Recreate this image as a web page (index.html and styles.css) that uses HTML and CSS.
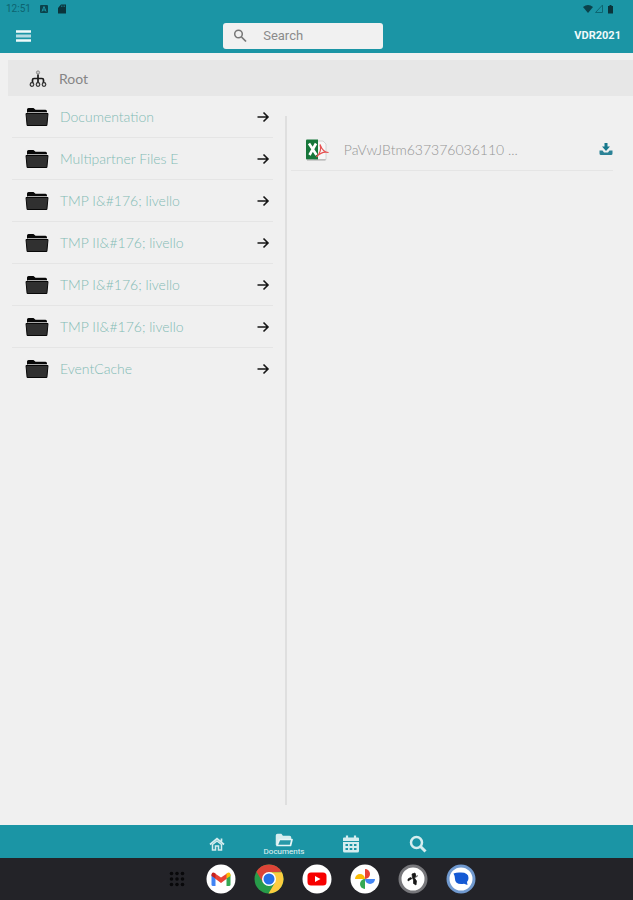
FILE: index.html
```html
<!DOCTYPE html>
<html lang="en">
<head>
<meta charset="utf-8">
<meta name="viewport" content="width=device-width, initial-scale=1">
<title>VDR2021 Documents</title>
<link rel="stylesheet" href="styles.css">
</head>
<body>
<svg class="defs" aria-hidden="true">
  <symbol id="folder" viewBox="0 0 24 20">
    <path d="M2 6V2.500q0-1.500 1.500-1.500H8.500L10.500 2.800H20.500Q22 2.800 22 4.500V5H4Z" fill="#080808"/>
    <path d="M2.500 5.500H22" stroke="#aaa" stroke-width="1"/>
    <path d="M1 6.500H23L21.900 18.500H2.100Z" fill="#303030" stroke="#080808" stroke-width="1" stroke-linejoin="round"/>
  </symbol>
  <symbol id="arrow" viewBox="0 0 14 14">
    <path d="M1.500 7H12M7.500 2.500 12 7 7.500 11.500" fill="none" stroke="#161616" stroke-width="1.600"/>
  </symbol>
</svg>
<header class="topbar">
  <div class="status">
    <span class="clock">12:51</span>
    <svg class="status-icon" viewBox="0 0 10 10"><rect x="1" y="1" width="8" height="8" rx="1" fill="#0b424b"/><path d="M3 7.500 5 2.500 7 7.500M3.500 6H6.500" fill="none" stroke="#1b95a5" stroke-width="1"/></svg>
    <svg class="status-icon sd" viewBox="0 0 10 10"><path d="M1 4 4 0.500H9V9.500H1Z" fill="#0b343b"/><path d="M4.500 1.500V3M6 1.500V3M7.500 1.500V3" stroke="#1b95a5" stroke-width=".6"/></svg>
    <svg class="signals" viewBox="0 0 32 10"><path d="M0 3Q5-1 10 3L5 9Z" fill="#0b424b"/><path d="M12.500 8.500 19.500 1V8.500Z" fill="none" stroke="#0d6672"/><path d="M25 2h1.500V1h2v1H30V9.500H25Z" fill="#0b343b"/></svg>
  </div>
  <div class="toolbar">
    <button class="menu" aria-label="Menu"><svg viewBox="0 0 16 14"><path d="M0 2.500H15M0 11.500H15" stroke="#f0fafa" stroke-width="2.600"/><path d="M0 7H15" stroke="#b5dbe2" stroke-width="3"/></svg></button>
    <label class="search">
      <svg viewBox="0 0 14 14"><circle cx="5.500" cy="5" r="3.800" fill="none" stroke="#777" stroke-width="1.500"/><path d="m8.500 8 4.500 4.500" stroke="#777" stroke-width="1.700"/></svg>
      <input type="search" placeholder="Search" aria-label="Search">
    </label>
    <span class="room">VDR2021</span>
  </div>
</header>
<main>
  <nav class="crumb" aria-label="Path">
    <svg viewBox="0 0 18 18"><circle cx="9" cy="2.500" r="1.600" fill="#ccc" stroke="#888"/><path d="M9 4.500V14M3.500 13V10Q3.500 8.500 5 8.500H13Q14.500 8.500 14.500 10V13" fill="none" stroke="#1a1a1a" stroke-width="1.700"/><g fill="#ddd" stroke="#333" stroke-width="1.200"><circle cx="3" cy="14.500" r="1.800"/><circle cx="9" cy="14.500" r="1.800"/><circle cx="15" cy="14.500" r="1.800"/></g></svg>
    <span>Root</span>
  </nav>
  <div class="panes">
    <ul class="folders">
      <li><a href="#"><svg class="folder"><use href="#folder"/></svg><span>Documentation</span><svg class="arrow"><use href="#arrow"/></svg></a></li>
      <li><a href="#"><svg class="folder"><use href="#folder"/></svg><span>Multipartner Files E</span><svg class="arrow"><use href="#arrow"/></svg></a></li>
      <li><a href="#"><svg class="folder"><use href="#folder"/></svg><span>TMP I&amp;#176; livello</span><svg class="arrow"><use href="#arrow"/></svg></a></li>
      <li><a href="#"><svg class="folder"><use href="#folder"/></svg><span>TMP II&amp;#176; livello</span><svg class="arrow"><use href="#arrow"/></svg></a></li>
      <li><a href="#"><svg class="folder"><use href="#folder"/></svg><span>TMP I&amp;#176; livello</span><svg class="arrow"><use href="#arrow"/></svg></a></li>
      <li><a href="#"><svg class="folder"><use href="#folder"/></svg><span>TMP II&amp;#176; livello</span><svg class="arrow"><use href="#arrow"/></svg></a></li>
      <li><a href="#"><svg class="folder"><use href="#folder"/></svg><span>EventCache</span><svg class="arrow"><use href="#arrow"/></svg></a></li>
    </ul>
    <section class="files">
      <div class="file">
        <svg class="filetype" viewBox="0 0 24 22"><path d="M10 2H18L21 5V20.500H9Z" fill="#f7f7f7" stroke="#ccc" stroke-width=".8"/><path d="M1 1.500Q1 .5 2 .5H13V20.500H2Q1 20.500 1 19.500Z" fill="#16763a"/><path d="M2 21H20.500" stroke="#999" stroke-width=".8"/><path d="m4 4.500 7.500 11.500M11 4.500 4.500 16" stroke="#fff" stroke-width="2.600"/><path d="M15 5.500C17 11 19 13.500 23.500 13.500C19 12.500 15 14 11.500 18C14.500 15 16.500 10 15 5.500Z" fill="none" stroke="#e65151" stroke-width="1.200"/></svg>
        <span class="name">PaVwJBtm637376036110 ...</span>
        <button class="download" aria-label="Download"><svg viewBox="0 0 14 14"><path d="M5.500 0h3v3.500H11L7 8 3 3.500H5.500Z" fill="#17788c"/><path d="M.5 7.500H3.500L5 9.500H9L10.500 7.500H13.500V10.500Q13.500 12 12 12H2Q.5 12 .5 10.500Z" fill="#2b8296"/></svg></button>
      </div>
    </section>
  </div>
</main>
<nav class="tabs" aria-label="Sections">
  <a href="#" aria-label="Home"><svg viewBox="0 0 18 18"><path d="M2 9.500 9 3.500 16 9.500M13.500 3.500V6.500" fill="none" stroke="#d5edef" stroke-width="1.700"/><path d="M4.500 9.500V15H7.500V11H10.500V15H13.500V9.500L9 6Z" fill="none" stroke="#d5edef" stroke-width="1.500"/></svg></a>
  <a href="#" class="active"><svg viewBox="0 0 18 15"><path d="M1.500 12V2.500Q1.500 1.500 2.500 1.500H6L7.500 3.500H14.500Q15.500 3.500 15.500 4.500V6" fill="#d5edef" stroke="#d5edef" stroke-width="1.500"/><path d="M4.500 6.500H17L15.500 12.500H2Z" fill="#2799a8" stroke="#e6f5f6" stroke-width="1.700" stroke-linejoin="round"/></svg><span>Documents</span></a>
  <a href="#" aria-label="Calendar"><svg viewBox="0 0 18 18"><path d="M2 2.500H16Q17 2.500 17 3.500V6H1V3.500Q1 2.500 2 2.500ZM1 7H17V16Q17 17.500 15.500 17.500H2.500Q1 17.500 1 16Z" fill="#d5edef"/><path d="M5 .5V4M13 .5V4" stroke="#d5edef" stroke-width="2.200"/><path d="M3.500 10H6M7.700 10H10.300M12 10H14.500M3.500 14H6M7.700 14H10.300M12 14H14.500" stroke="#1b95a5" stroke-width="1.900"/></svg></a>
  <a href="#" aria-label="Find"><svg viewBox="0 0 18 18"><circle cx="7.500" cy="7.500" r="5.500" fill="none" stroke="#d5edef" stroke-width="2.500"/><path d="m11.500 11.500 5 5" stroke="#d5edef" stroke-width="3"/></svg></a>
</nav>
<footer class="dock">
  <button class="apps" aria-label="All apps"><svg viewBox="0 0 22 30"><g fill="#08080a"><circle cx="5.500" cy="9.500" r="1.800"/><circle cx="11" cy="9.500" r="1.800"/><circle cx="16.500" cy="9.500" r="1.800"/><circle cx="5.500" cy="15" r="1.800"/><circle cx="11" cy="15" r="1.800"/><circle cx="16.500" cy="15" r="1.800"/><circle cx="5.500" cy="20.500" r="1.800"/><circle cx="11" cy="20.500" r="1.800"/><circle cx="16.500" cy="20.500" r="1.800"/></g></svg></button>
  <button aria-label="Gmail"><svg viewBox="0 0 30 30"><circle cx="15" cy="15" r="14.500" fill="#fff"/><path d="M5.500 10.500 9.500 13V22H7Q5.500 22 5.500 20.500Z" fill="#4285f4"/><path d="M24.500 10.500 20.500 13V22H23Q24.500 22 24.500 20.500Z" fill="#34a853"/><path d="M9 9.500 15 13.500 21 9.500V14.500L15 19 9 14.500Z" fill="#ea4335"/><path d="M5.500 10.500Q6 7 9.500 9.500V14.500L5.500 12Z" fill="#c5221f"/><path d="M24.500 10.500Q24 7 20.500 9.500V14.500L24.500 12Z" fill="#fbbc04"/></svg></button>
  <button aria-label="Chrome"><svg viewBox="0 0 30 30"><circle cx="15" cy="15" r="14.500" fill="#279b49"/><path d="M2.440 7.750A14.500 14.500 0 0 1 27.560 7.750L15 8.300 9 18.500Z" fill="#dc4437"/><path d="M15 8.300H27.900A14.500 14.500 0 0 1 14.500 29.500L21 18.500Z" fill="#fccc3f"/><circle cx="15" cy="15" r="7" fill="#fff"/><circle cx="15" cy="15" r="5.500" fill="#2671e7"/></svg></button>
  <button aria-label="YouTube"><svg viewBox="0 0 30 30"><circle cx="15" cy="15" r="14.500" fill="#fff"/><rect x="5.500" y="8.500" width="19" height="13" rx="3.500" fill="#f70000"/><path d="m13 12 5.500 3-5.500 3Z" fill="#fff"/></svg></button>
  <button aria-label="Photos"><svg viewBox="0 0 30 30"><circle cx="15" cy="15" r="14.500" fill="#fff"/><path d="M15 5A5 5 0 0 1 15 15Z" fill="#ea4335"/><path d="M25 15A5 5 0 0 1 15 15Z" fill="#4285f4"/><path d="M15 25A5 5 0 0 1 15 15Z" fill="#34a853"/><path d="M5 15A5 5 0 0 1 15 15Z" fill="#fbbc04"/></svg></button>
  <button aria-label="Assistant"><svg viewBox="0 0 30 30"><circle cx="15" cy="15" r="13" fill="#fff" stroke="#77777b" stroke-width="3"/><path d="M14.500 14 14 10 17 9 18 12 16.500 14 18.500 17 18 21 15.500 19.500 15.500 16ZM14 14.500 10 17 10 15 12.500 13.500ZM17.500 13.500 20 11.500" fill="#161616" stroke="#161616" stroke-width=".7"/></svg></button>
  <button aria-label="Messages"><svg viewBox="0 0 30 30"><circle cx="15" cy="15" r="13" fill="#fff" stroke="#7099cf" stroke-width="3"/><path d="M7.500 9.500Q11 8 15 8.500Q22.500 8.500 22.500 14Q22.500 16.500 21 18L21.500 21 18 19.800Q9 21 9 15Q9 12 7.500 9.500Z" fill="#1459d4"/></svg></button>
</footer>
</body>
</html>
```

FILE: styles.css
```css
* { box-sizing: border-box; }
body {
  margin: 0;
  min-height: 100vh;
  display: flex;
  flex-direction: column;
  background: #f0f0f0;
  font-family: Lato, "Liberation Sans", sans-serif;
  font-size: 14px;
  line-height: 20px;
}
svg { display: block; flex: none; }
button { padding: 0; border: 0; background: none; }
a { color: inherit; text-decoration: none; }
.defs { position: absolute; width: 0; height: 0; }

.topbar { background: #1b95a5; font-family: Roboto, sans-serif; }
.status {
  display: flex;
  align-items: center;
  height: 18px;
  padding: 0 18px 0 6px;
}
.clock { font-size: 10px; color: #0d6470; }
.status-icon { width: 10px; height: 10px; margin-left: 8px; }
.signals { width: 32px; height: 10px; margin-left: auto; }
.toolbar {
  display: flex;
  justify-content: space-between;
  align-items: center;
  height: 35px;
  padding: 0 12px 0 16px;
}
.menu { width: 16px; }
.search {
  display: flex;
  align-items: center;
  gap: 16px;
  width: 160px;
  height: 26px;
  padding: 0 10px;
  border-radius: 3px;
  background: #f1f1f1;
}
.search svg { width: 14px; height: 14px; }
.search input {
  width: 100%;
  min-width: 0;
  padding: 0;
  border: 0;
  outline: 0;
  background: none;
  color: #666;
  font: 13px/20px Roboto, sans-serif;
}
.search input::placeholder { color: #8b8b8b; opacity: 1; }
.room {
  color: #f0fafa;
  font-size: 11px;
  font-weight: 700;
}

main { flex: 1; display: flex; flex-direction: column; padding-top: 7px; }
.crumb {
  display: flex;
  align-items: center;
  gap: 12px;
  height: 36px;
  margin-left: 8px;
  padding: 2px 21px 0;
  background: #e7e7e7;
  color: #858585;
  font-size: 14px;
}
.crumb svg { width: 18px; height: 18px; }
.panes {
  flex: 1;
  display: grid;
  grid-template-columns: 45% 1fr;
  padding-bottom: 20px;
}
.folders { margin: 0; padding: 0 12px; list-style: none; }
.folders li + li { border-top: 1px solid #e5e5e5; }
.folders a {
  display: flex;
  align-items: center;
  height: 41px;
  padding: 0 3px 0 13px;
  color: #83bbb5;
  font-weight: 300;
}
.folder { width: 24px; height: 20px; margin-right: 11px; }
.arrow { width: 14px; height: 14px; margin-left: auto; }
.files {
  margin-top: 20px;
  padding: 13px 20px 0 4px;
  border-left: 2px solid #dfdfdf;
}
.file {
  display: flex;
  align-items: center;
  height: 42px;
  padding-left: 14px;
  border-bottom: 1px solid #e5e5e5;
}
.filetype { width: 24px; height: 22px; margin-right: 15px; }
.name { color: #959595; font-weight: 300; }
.download { width: 14px; margin-left: auto; }

.tabs {
  display: flex;
  justify-content: center;
  height: 33px;
  padding-left: 2px;
  background: #1b95a5;
  color: #e6f5f6;
  font: 8px/8px Roboto, sans-serif;
}
.tabs a {
  display: flex;
  flex-direction: column;
  align-items: center;
  justify-content: center;
  width: 67px;
  padding-top: 5px;
}
.tabs svg { width: 18px; height: 18px; }
.tabs .active svg { height: 15px; }
.dock {
  display: flex;
  justify-content: center;
  gap: 18px;
  height: 42px;
  padding-left: 8px;
  background: #232328;
}
.dock svg { width: 30px; height: 30px; }
.dock .apps svg { width: 22px; }
```
